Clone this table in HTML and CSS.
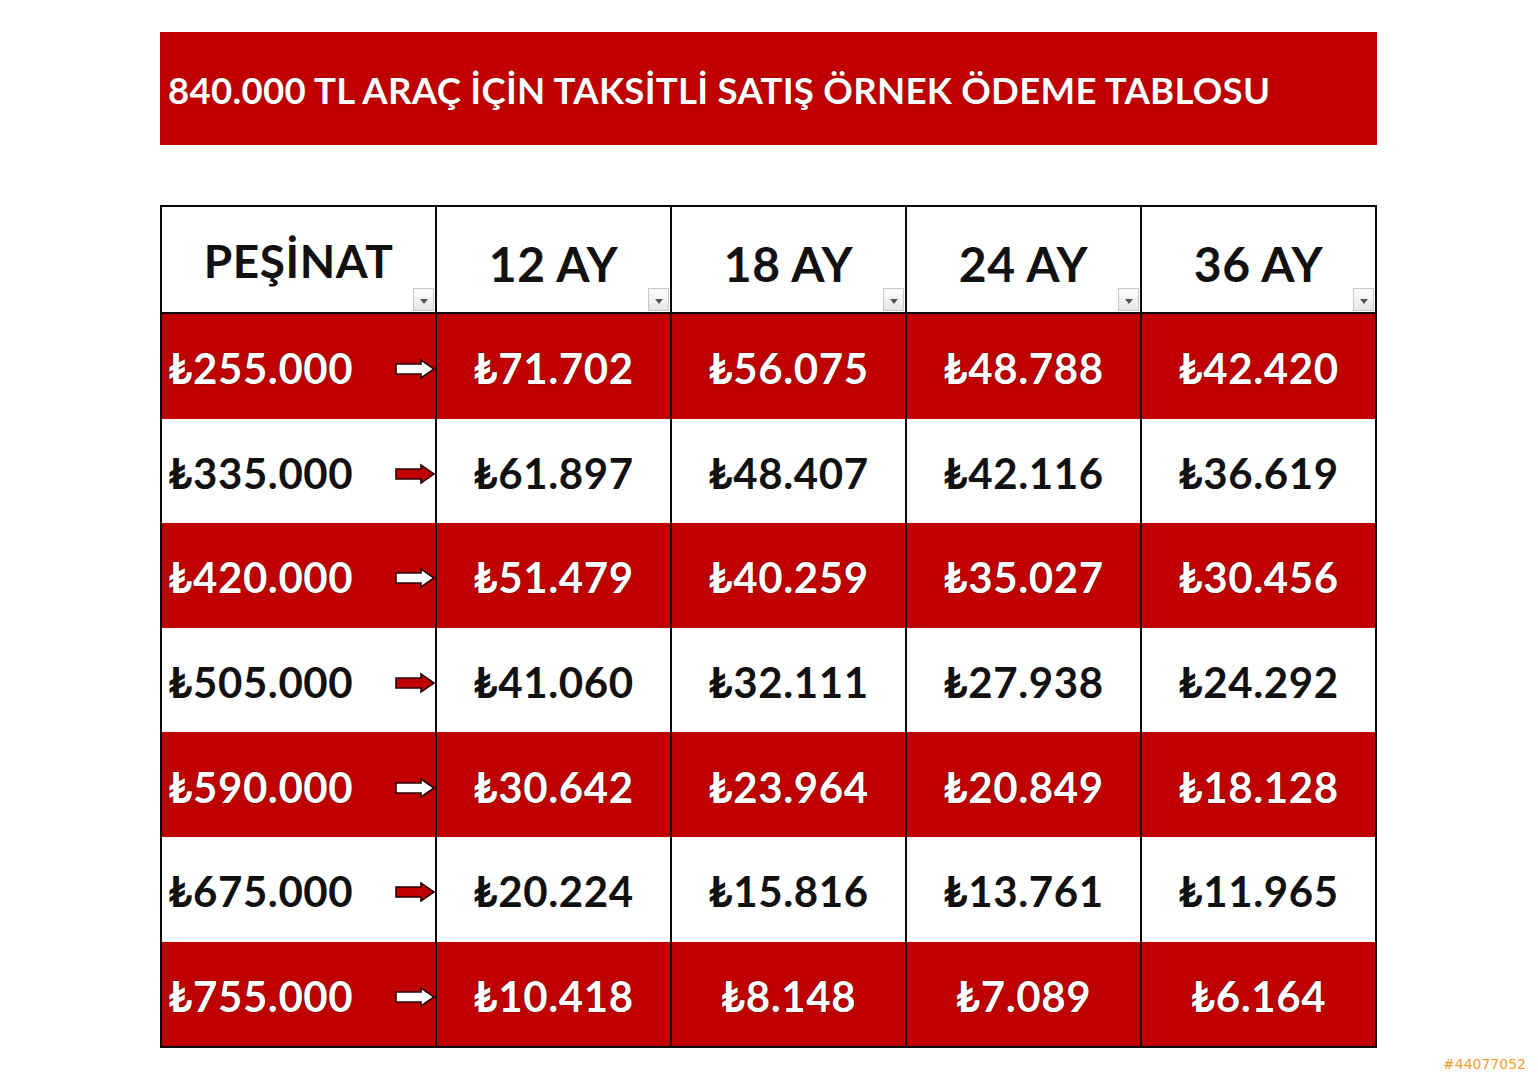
FILE: index.html
```html
<!DOCTYPE html>
<html lang="tr">
<head>
<meta charset="utf-8">
<title>Taksitli Satış Örnek Ödeme Tablosu</title>
<link rel="stylesheet" href="styles.css">
</head>
<body>
<div class="page">
  <div class="title-bar"><h1 class="title">840.000 TL ARAÇ İÇİN TAKSİTLİ SATIŞ ÖRNEK ÖDEME TABLOSU</h1></div>

  <div class="table">
    <div class="cell head first">PEŞİNAT<span class="filter"></span></div>
    <div class="cell head">12 AY<span class="filter"></span></div>
    <div class="cell head">18 AY<span class="filter"></span></div>
    <div class="cell head">24 AY<span class="filter"></span></div>
    <div class="cell head last">36 AY<span class="filter"></span></div>

    <div class="cell red first">₺255.000<svg class="arrow arrow-white" viewBox="0 0 40 20"><polygon points="1,5 26,5 26,1 39,10 26,19 26,15 1,15"/></svg></div>
    <div class="cell red">₺71.702</div>
    <div class="cell red">₺56.075</div>
    <div class="cell red">₺48.788</div>
    <div class="cell red last">₺42.420</div>

    <div class="cell white first">₺335.000<svg class="arrow arrow-red" viewBox="0 0 40 20"><polygon points="1,5 26,5 26,1 39,10 26,19 26,15 1,15"/></svg></div>
    <div class="cell white">₺61.897</div>
    <div class="cell white">₺48.407</div>
    <div class="cell white">₺42.116</div>
    <div class="cell white last">₺36.619</div>

    <div class="cell red first">₺420.000<svg class="arrow arrow-white" viewBox="0 0 40 20"><polygon points="1,5 26,5 26,1 39,10 26,19 26,15 1,15"/></svg></div>
    <div class="cell red">₺51.479</div>
    <div class="cell red">₺40.259</div>
    <div class="cell red">₺35.027</div>
    <div class="cell red last">₺30.456</div>

    <div class="cell white first">₺505.000<svg class="arrow arrow-red" viewBox="0 0 40 20"><polygon points="1,5 26,5 26,1 39,10 26,19 26,15 1,15"/></svg></div>
    <div class="cell white">₺41.060</div>
    <div class="cell white">₺32.111</div>
    <div class="cell white">₺27.938</div>
    <div class="cell white last">₺24.292</div>

    <div class="cell red first">₺590.000<svg class="arrow arrow-white" viewBox="0 0 40 20"><polygon points="1,5 26,5 26,1 39,10 26,19 26,15 1,15"/></svg></div>
    <div class="cell red">₺30.642</div>
    <div class="cell red">₺23.964</div>
    <div class="cell red">₺20.849</div>
    <div class="cell red last">₺18.128</div>

    <div class="cell white first">₺675.000<svg class="arrow arrow-red" viewBox="0 0 40 20"><polygon points="1,5 26,5 26,1 39,10 26,19 26,15 1,15"/></svg></div>
    <div class="cell white">₺20.224</div>
    <div class="cell white">₺15.816</div>
    <div class="cell white">₺13.761</div>
    <div class="cell white last">₺11.965</div>

    <div class="cell red first">₺755.000<svg class="arrow arrow-white" viewBox="0 0 40 20"><polygon points="1,5 26,5 26,1 39,10 26,19 26,15 1,15"/></svg></div>
    <div class="cell red">₺10.418</div>
    <div class="cell red">₺8.148</div>
    <div class="cell red">₺7.089</div>
    <div class="cell red last">₺6.164</div>
  </div>
</div>
<div class="watermark">#44077052</div>
</body>
</html>
```

FILE: styles.css
```css
html, body {
  margin: 0;
  padding: 0;
  background: #ffffff;
}
body {
  width: 1538px;
  height: 1080px;
  position: relative;
  overflow: hidden;
  font-family: "Lato", "Noto Sans", "DejaVu Sans", sans-serif;
}
.page {
  padding: 32px 0 0 160px;
}
.title-bar {
  width: 1217px;
  height: 113px;
  background: #c00000;
  display: flex;
  align-items: center;
  box-sizing: border-box;
  padding: 2px 0 0 8px;
}
.title {
  margin: 0;
  color: #ffffff;
  font-size: 36.6px;
  font-weight: 700;
  letter-spacing: 0.28px;
  text-shadow: 0 0 1px #5a0000;
  white-space: nowrap;
}
.table {
  margin-top: 60px;
  width: 1217px;
  box-sizing: border-box;
  border: 2px solid #0a0a0a;
  display: grid;
  grid-template-columns: 275px 235px 235px 235px 233px;
  grid-template-rows: 107px repeat(7, 104.6px);
}
.cell {
  position: relative;
  display: flex;
  align-items: center;
  justify-content: center;
  border-right: 2.5px solid #0a0a0a;
  font-weight: 700;
  font-size: 42px;
  letter-spacing: 0.6px;
  box-sizing: border-box;
  padding-top: 4px;
}
.cell.last {
  border-right: none;
}
.cell.first {
  justify-content: flex-start;
  padding-left: 6px;
}
.cell.head {
  background: #ffffff;
  color: #111111;
  font-size: 48px;
  border-bottom: 2.5px solid #0a0a0a;
  padding-top: 8px;
}
.cell.head.first {
  justify-content: center;
  font-size: 46px;
  padding-left: 0;
  padding-top: 2px;
}
.cell.red {
  background: #c00000;
  color: #ffffff;
  text-shadow: 0 0 1px #400000, 0 0 1px #400000;
}
.cell.white {
  background: #ffffff;
  color: #111111;
}
.filter {
  position: absolute;
  right: 1px;
  bottom: 1px;
  width: 21px;
  height: 23px;
  box-sizing: border-box;
  border: 1px solid #c8c8c8;
  background: linear-gradient(#ffffff, #e6e6e6);
}
.filter::after {
  content: "";
  position: absolute;
  left: 6px;
  top: 10px;
  border-left: 4px solid transparent;
  border-right: 4px solid transparent;
  border-top: 5px solid #555555;
}
.arrow {
  position: absolute;
  right: 0;
  top: 50%;
  margin-top: -7px;
  width: 40px;
  height: 20px;
  overflow: visible;
}
.arrow polygon {
  stroke: #2a0000;
  stroke-width: 1.6;
  stroke-linejoin: miter;
}
.arrow-white polygon {
  fill: #ffffff;
}
.arrow-red polygon {
  fill: #c00000;
}
.watermark {
  position: absolute;
  left: 1443px;
  top: 1056px;
  font-family: "DejaVu Sans", sans-serif;
  font-size: 14px;
  color: #f0a030;
}
```
